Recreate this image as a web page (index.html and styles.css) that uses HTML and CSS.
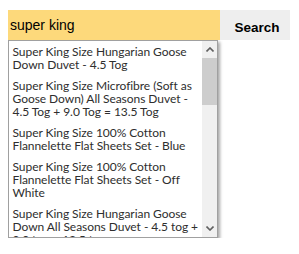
FILE: index.html
```html
<!DOCTYPE html>
<html lang="en">
<head>
    <meta charset="UTF-8">
    <title>Search</title>
    <link rel="stylesheet" href="styles.css">
</head>
<body>
    <div class="search">
        <div class="bar">
            <div class="query">super king</div>
            <button class="go">Search</button>
        </div>
        <div class="suggest">
            <ul class="items">
                <li>Super King Size Hungarian Goose Down Duvet - 4.5 Tog</li>
                <li>Super King Size Microfibre (Soft as Goose Down) All Seasons Duvet - 4.5 Tog + 9.0 Tog = 13.5 Tog</li>
                <li>Super King Size 100% Cotton Flannelette Flat Sheets Set - Blue</li>
                <li>Super King Size 100% Cotton Flannelette Flat Sheets Set - Off White</li>
                <li>Super King Size Hungarian Goose Down All Seasons Duvet - 4.5 tog + 9.0 tog = 13.5 tog</li>
            </ul>
            <div class="scroll">
                <div class="arrow">
                    <svg width="8" height="5" viewBox="0 0 8 5"><polyline points="0.5,4.5 4,1 7.5,4.5" fill="none" stroke="#606060" stroke-width="1.6"/></svg>
                </div>
                <div class="thumb"></div>
                <div class="track"></div>
                <div class="arrow">
                    <svg width="8" height="5" viewBox="0 0 8 5"><polyline points="0.5,0.5 4,4 7.5,0.5" fill="none" stroke="#606060" stroke-width="1.6"/></svg>
                </div>
            </div>
        </div>
    </div>
</body>
</html>
```
FILE: styles.css
```css
body { margin: 10px 8px; background: #fff; font-family: "Liberation Sans", Arial, sans-serif; }
.search { width: 284px; }
.bar { display: flex; height: 30px; }
.query { width: 212px; background: #fdd97b; font-size: 14px; color: #000; padding: 7px 2px 0; box-sizing: border-box; }
.go { width: 70px; border: none; background: #eeeeee; font-family: "Liberation Sans", Arial, sans-serif; font-weight: bold; font-size: 13.5px; color: #000; padding: 5px 0 0 4px; }
.suggest { display: flex; width: 210px; height: 198px; box-sizing: border-box; border: 1px solid #a0a0a0; background: #fff; box-shadow: 2px 2px 3px rgba(0,0,0,0.35); }
.items { flex: 1; margin: 0; padding: 0; list-style: none; overflow: hidden; }
.items li { font-family: Lato, sans-serif; font-size: 12px; line-height: 13px; letter-spacing: -0.05px; color: #2e2e2e; padding: 4px 0 4px 3.5px; }
.scroll { width: 15px; display: flex; flex-direction: column; background: #f0f0f0; }
.arrow { height: 17px; display: flex; align-items: center; justify-content: center; }
.thumb { height: 47px; background: #cdcdcd; }
.track { flex: 1; }
```
